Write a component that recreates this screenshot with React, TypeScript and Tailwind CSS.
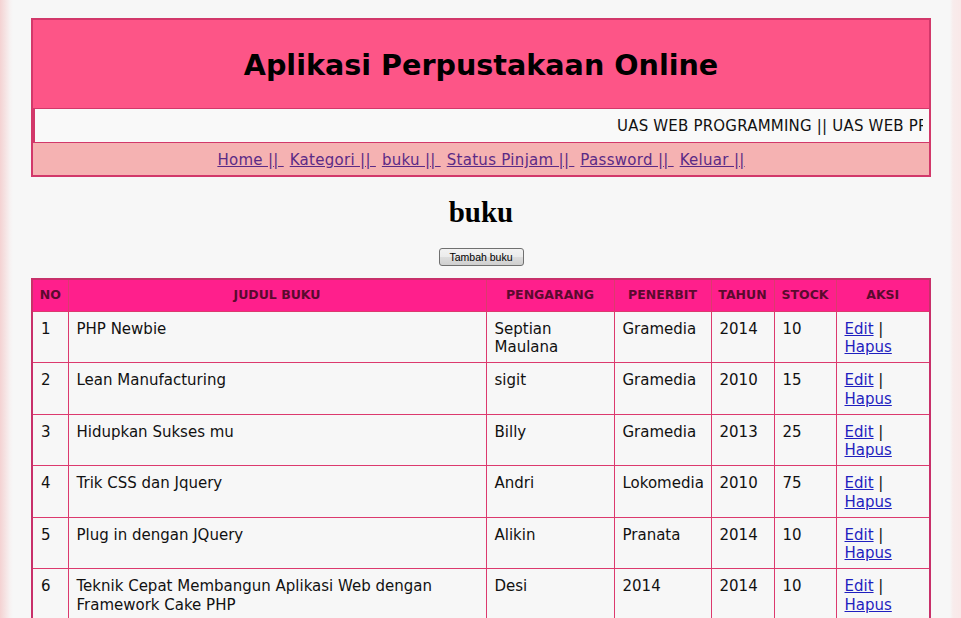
import React from "react";

const rows = [
  { no: 1, judul: "PHP Newbie", pengarang: "Septian Maulana", penerbit: "Gramedia", tahun: "2014", stock: "10" },
  { no: 2, judul: "Lean Manufacturing", pengarang: "sigit", penerbit: "Gramedia", tahun: "2010", stock: "15" },
  { no: 3, judul: "Hidupkan Sukses mu", pengarang: "Billy", penerbit: "Gramedia", tahun: "2013", stock: "25" },
  { no: 4, judul: "Trik CSS dan Jquery", pengarang: "Andri", penerbit: "Lokomedia", tahun: "2010", stock: "75" },
  { no: 5, judul: "Plug in dengan JQuery", pengarang: "Alikin", penerbit: "Pranata", tahun: "2014", stock: "10" },
  { no: 6, judul: "Teknik Cepat Membangun Aplikasi Web dengan Framework Cake PHP", pengarang: "Desi", penerbit: "2014", tahun: "2014", stock: "10" },
];

const navLinks = ["Home || ", "Kategori || ", "buku || ", "Status Pinjam || ", "Password || ", "Keluar ||"];

const td = "border border-[#dc3a6e] align-top pt-[8px] pb-[5.5px] pl-[8px] pr-[6px]";
const th = "border border-[#dc3a6e] h-[32px] text-center align-middle px-[2px] font-bold";

export default function App() {
  return (
    <div
      className="min-h-screen pt-[18px] pb-10 bg-[linear-gradient(to_right,#f4d2d2_0px,#f7f2f2_10px,#f7f7f7_13px,#f7f7f7_950px,#f8ecec_953px,#f9e8e8_961px)]"
      style={{ fontFamily: '"DejaVu Sans", Verdana, sans-serif' }}
    >
      <div className="ml-[31px] w-[900px]">
        {/* Header */}
        <div className="border-2 border-[#d2386a]">
          <div className="h-[89px] bg-[#fd5587] border-b border-[#d2386a] flex items-center justify-center">
            <h1 className="text-[28.6px] font-bold text-black leading-none pt-[2px]">Aplikasi Perpustakaan Online</h1>
          </div>
          <div className="h-[33px] bg-[#f9f9f9] border-l-2 border-[#d2386a] flex items-center">
            <div className="ml-[582px] mr-[6px] overflow-hidden whitespace-nowrap text-[15px] tracking-[0.2px] text-[#111] leading-[20px]">
              UAS WEB PROGRAMMING || UAS WEB PROGRAMMING || UAS WEB PROGRAMMING
            </div>
          </div>
          <div className="h-[33px] bg-[#f5b2b2] border-t border-[#d2386a] flex items-center justify-center gap-[6px] pt-[3px]">
            {navLinks.map((l) => (
              <a key={l} href="#" className="whitespace-pre text-[15px] tracking-[0.3px] text-[#5b2a86] underline leading-none">
                {l}
              </a>
            ))}
          </div>
        </div>

        {/* Title */}
        <h2
          className="mt-[21px] text-center text-[29px] leading-[29px] font-bold text-black"
          style={{ fontFamily: '"Liberation Serif", "Times New Roman", serif' }}
        >
          buku
        </h2>

        <div className="mt-[21px] flex justify-center">
          <button
            className="h-[18px] w-[85px] rounded-[3px] border border-[#707070] bg-[linear-gradient(to_bottom,#f2f2f2,#ebebeb_50%,#dddddd_51%,#cfcfcf)] text-[10.5px] text-black leading-none"
            style={{ fontFamily: '"Liberation Sans", Tahoma, sans-serif' }}
          >
            Tambah buku
          </button>
        </div>

        {/* Table */}
        <table className="mt-[12px] w-[898px] table-fixed border-collapse border-2 border-[#c8306a] text-[15px] leading-[18.5px] text-[#111]">
          <colgroup>
            <col className="w-[36px]" />
            <col className="w-[418px]" />
            <col className="w-[128px]" />
            <col className="w-[97px]" />
            <col className="w-[63px]" />
            <col className="w-[62px]" />
            <col className="w-[94px]" />
          </colgroup>
          <thead>
            <tr className="bg-[#ff1f8c] text-[12.5px] text-[#5a0a2e]">
              <th className={th}>NO</th>
              <th className={th}>JUDUL BUKU</th>
              <th className={th}>PENGARANG</th>
              <th className={th}>PENERBIT</th>
              <th className={th}>TAHUN</th>
              <th className={th}>STOCK</th>
              <th className={th}>AKSI</th>
            </tr>
          </thead>
          <tbody>
            {rows.map((r) => (
              <tr key={r.no}>
                <td className={td}>{r.no}</td>
                <td className={td}>{r.judul}</td>
                <td className={td}>{r.pengarang}</td>
                <td className={td}>{r.penerbit}</td>
                <td className={td}>{r.tahun}</td>
                <td className={td}>{r.stock}</td>
                <td className={td}>
                  <a href="#" className="text-[#1f1fbf] underline">Edit</a> |{" "}
                  <a href="#" className="text-[#1f1fbf] underline">Hapus</a>
                </td>
              </tr>
            ))}
          </tbody>
        </table>
      </div>
    </div>
  );
}
